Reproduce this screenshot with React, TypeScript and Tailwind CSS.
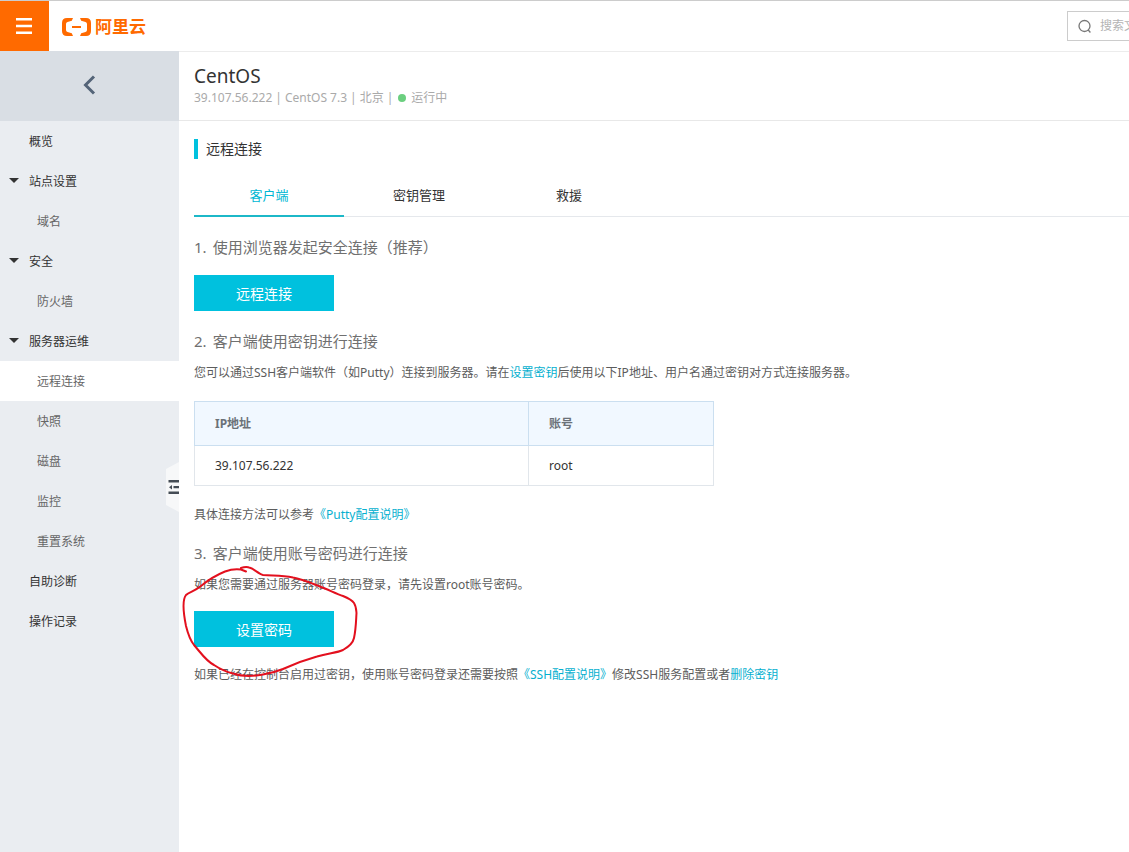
import React from 'react';

const menu = [
  { label: '概览' },
  { label: '站点设置', group: true },
  { label: '域名', child: true },
  { label: '安全', group: true },
  { label: '防火墙', child: true },
  { label: '服务器运维', group: true },
  { label: '远程连接', child: true, active: true },
  { label: '快照', child: true },
  { label: '磁盘', child: true },
  { label: '监控', child: true },
  { label: '重置系统', child: true },
  { label: '自助诊断' },
  { label: '操作记录' },
];

const tabs = ['客户端', '密钥管理', '救援'];

function TopBar() {
  return (
    <header className="flex h-[51px] items-stretch border-t border-[#cccccc] bg-white">
      <button type="button" aria-label="菜单" className="flex w-[49px] items-center justify-center bg-[#ff6a00]">
        <svg width="17" height="16" viewBox="0 0 17 16" fill="#fff">
          <path d="M0 0h16v2.600H0zM0 6.700h16v2.600H0zM0 13.400h16V16H0z" />
        </svg>
      </button>
      <a href="#" className="ml-[13px] flex items-center gap-1 pt-0.5 text-[#ff6a00]">
        <svg width="29" height="18" viewBox="0 0 29 18" fill="currentColor">
          <path d="M11 0H5Q0 0 0 5v8q0 5 5 5h6l-1.200-2.700-4.300-1.200q-1.500-.5-1.500-2V6q0-1.600 1.500-2l4.300-1.200z" />
          <path d="M18 0h6q5 0 5 5v8q0 5-5 5h-6l1.200-2.700 4.300-1.200q1.500-.5 1.500-2V6q0-1.600-1.500-2l-4.300-1.200z" />
          <path d="M10 8h9v2h-9z" />
        </svg>
        <span className="text-[17px] leading-6 font-bold">阿里云</span>
      </a>
      <label className="my-[10px] ml-auto flex w-[62px] items-center gap-2 overflow-hidden border border-r-0 border-[#cccccc] pl-[9px]">
        <svg className="shrink-0" width="15" height="15" viewBox="0 0 15 15" fill="none" stroke="#777" strokeWidth="1.300">
          <circle cx="7.500" cy="7" r="5.500" />
          <path d="M11 10.800l2.400 2.700" />
        </svg>
        <input type="text" aria-label="搜索" placeholder="搜索文档" className="w-full min-w-0 text-xs outline-none placeholder:text-[#b4b4b4]" />
      </label>
    </header>
  );
}

function Sidebar() {
  return (
    <aside className="relative w-[179px] shrink-0 bg-[#eaedf1]">
      <button type="button" aria-label="返回" className="flex h-[70px] w-full items-center justify-center bg-[#d9dee4]">
        <svg width="16" height="22" viewBox="0 0 16 22" fill="none" stroke="#546478" strokeWidth="3">
          <path d="M12 1.500L3.500 10l8.500 8.500" />
        </svg>
      </button>
      <nav className="text-xs">
        {menu.map(({ label, group, child, active }) => (
          <a
            key={label}
            href="#"
            className={`flex h-10 items-center pt-0.5 ${child ? 'pl-[37px] text-[#666666]' : group ? 'pl-[9px] text-[#333333]' : 'pl-[29px] text-[#333333]'} ${active ? 'bg-white' : ''}`}
          >
            {group && (
              <svg className="mr-[10px] mb-1" width="10" height="5" viewBox="0 0 10 5" fill="#333">
                <path d="M0 0h10L5 5z" />
              </svg>
            )}
            {label}
          </a>
        ))}
      </nav>
      {/* collapse handle */}
      <button type="button" aria-label="收起" className="absolute top-[411px] right-0">
        <svg width="13" height="50" viewBox="0 0 13 50">
          <path d="M13 0L0 7v36l13 7z" fill="#f7f8f9" />
          <path d="M2.500 18H13v2.500H2.500zM7.500 24H13v2.300H7.500zM2.500 29.500H13V32H2.500zM3 25.200L6 23v4.400z" fill="#444c55" />
        </svg>
      </button>
    </aside>
  );
}

function Heading({ no, children, className }: { no: number; children: React.ReactNode; className: string }) {
  return (
    <h3 className={`flex gap-1.5 text-[15px] leading-6 text-[#707070] ${className}`}>
      <span>{no}.</span>
      <span>{children}</span>
    </h3>
  );
}

function PrimaryButton({ children }: { children: React.ReactNode }) {
  return (
    <button type="button" className="mt-4 block h-9 w-[140px] bg-[#00c1de] pt-0.5 text-sm text-white">
      {children}
    </button>
  );
}

function TextLink({ children }: { children: React.ReactNode }) {
  return <a href="#" className="text-[#06b0cf]">{children}</a>;
}

function AccountTable() {
  return (
    <table className="mt-[18px] w-[520px] table-fixed border-collapse text-left text-xs">
      <thead>
        <tr className="h-11 bg-[#f1f8ff] text-[#6b7178]">
          <th className="w-[334px] border border-[#cbdff0] px-5 font-bold">IP地址</th>
          <th className="border border-[#cbdff0] px-5 font-bold">账号</th>
        </tr>
      </thead>
      <tbody>
        <tr className="h-10 text-[#333333]">
          <td className="border border-[#e1e6eb] px-5">39.107.56.222</td>
          <td className="border border-[#e1e6eb] px-5">root</td>
        </tr>
      </tbody>
    </table>
  );
}

export default function App() {
  return (
    <div className="flex min-h-screen flex-col overflow-x-hidden bg-white font-['Noto_Sans','Noto_Sans_CJK_SC',sans-serif]">
      <TopBar />
      <div className="flex flex-1">
        <Sidebar />
        <main className="min-w-0 flex-1 border-t border-[#ececec]">
          <div className="h-[69px] border-b border-[#e8e8e8] pt-3 pl-[15px]">
            <h1 className="text-[19px] leading-6 text-[#333333]">CentOS</h1>
            <p className="flex items-center gap-[3px] text-xs leading-5 text-[#aaaaaa]">
              <span>39.107.56.222</span>
              <span>|</span>
              <span>CentOS 7.3</span>
              <span>|</span>
              <span>北京</span>
              <span>|</span>
              <span className="mx-0.5 size-2 rounded-full bg-[#6bcf7f]" />
              <span>运行中</span>
            </p>
          </div>

          <div className="pt-[18px] pl-[15px] text-xs text-[#5c5c5c]">
            <h2 className="border-l-4 border-[#00c1de] pl-2 text-sm leading-5 text-[#333333]">远程连接</h2>

            <div role="tablist" className="mt-4 flex h-[42px] border-b border-[#e5e8ec]">
              {tabs.map((tab, i) => (
                <button
                  key={tab}
                  type="button"
                  role="tab"
                  aria-selected={i === 0}
                  className={`-mb-px w-[150px] border-b-2 pt-0.5 text-[13px] ${i === 0 ? 'border-[#1cb8c8] text-[#00b7d3]' : 'border-transparent text-[#333333]'}`}
                >
                  {tab}
                </button>
              ))}
            </div>

            <Heading no={1} className="mt-[18px]">使用浏览器发起安全连接（推荐）</Heading>
            <PrimaryButton>远程连接</PrimaryButton>

            <Heading no={2} className="mt-[18px]">客户端使用密钥进行连接</Heading>
            <p className="mt-[10px] leading-5">
              您可以通过SSH客户端软件（如Putty）连接到服务器。请在<TextLink>设置密钥</TextLink>后使用以下IP地址、用户名通过密钥对方式连接服务器。
            </p>
            <AccountTable />
            <p className="mt-[18px] leading-[22px]">
              具体连接方法可以参考<TextLink>《Putty配置说明》</TextLink>
            </p>

            <Heading no={3} className="mt-[15px]">客户端使用账号密码进行连接</Heading>
            <div className="relative">
              <p className="mt-[10px] leading-5">如果您需要通过服务器账号密码登录，请先设置root账号密码。</p>
              <PrimaryButton>设置密码</PrimaryButton>
              <p className="mt-[18px] leading-5">
                如果已经在控制台启用过密钥，使用账号密码登录还需要按照<TextLink>《SSH配置说明》</TextLink>修改SSH服务配置或者<TextLink>删除密钥</TextLink>
              </p>
              {/* hand-drawn circle around the password button */}
              <svg
                className="pointer-events-none absolute -top-[10px] -left-[14px]"
                width="180"
                height="115"
                viewBox="180 565 180 115"
                fill="none"
                stroke="#e3101e"
                strokeWidth="2"
                strokeLinecap="round"
                strokeLinejoin="round"
              >
                <path d="M246 571.500L241 569.500C235 568.500 229 570 225 571.500C214 576 207 581 201 586C195 591 189 592 186 595C182 600 184 616 186 626C188 634 190 640 194 645C201 653 206 661 214 665C220 669 227 672 233 673.500C243 677 253 676.500 263 674.500C272 673 278 671 283 669C298 662 308 659 317 656.500C328 653 337 653 343 650C350 646 353 643 354 638C356 629 356 621 356.500 613C356 608 356 606 354 603C352 600 348 598 343 596C337 594 329 590 320 586.500C311 583 302 579 293 577.500C281 575 272 576 263 575C259 574 254 569 250 567.800C247 566.500 244 567 241 568" />
              </svg>
            </div>
          </div>
        </main>
      </div>
    </div>
  );
}
